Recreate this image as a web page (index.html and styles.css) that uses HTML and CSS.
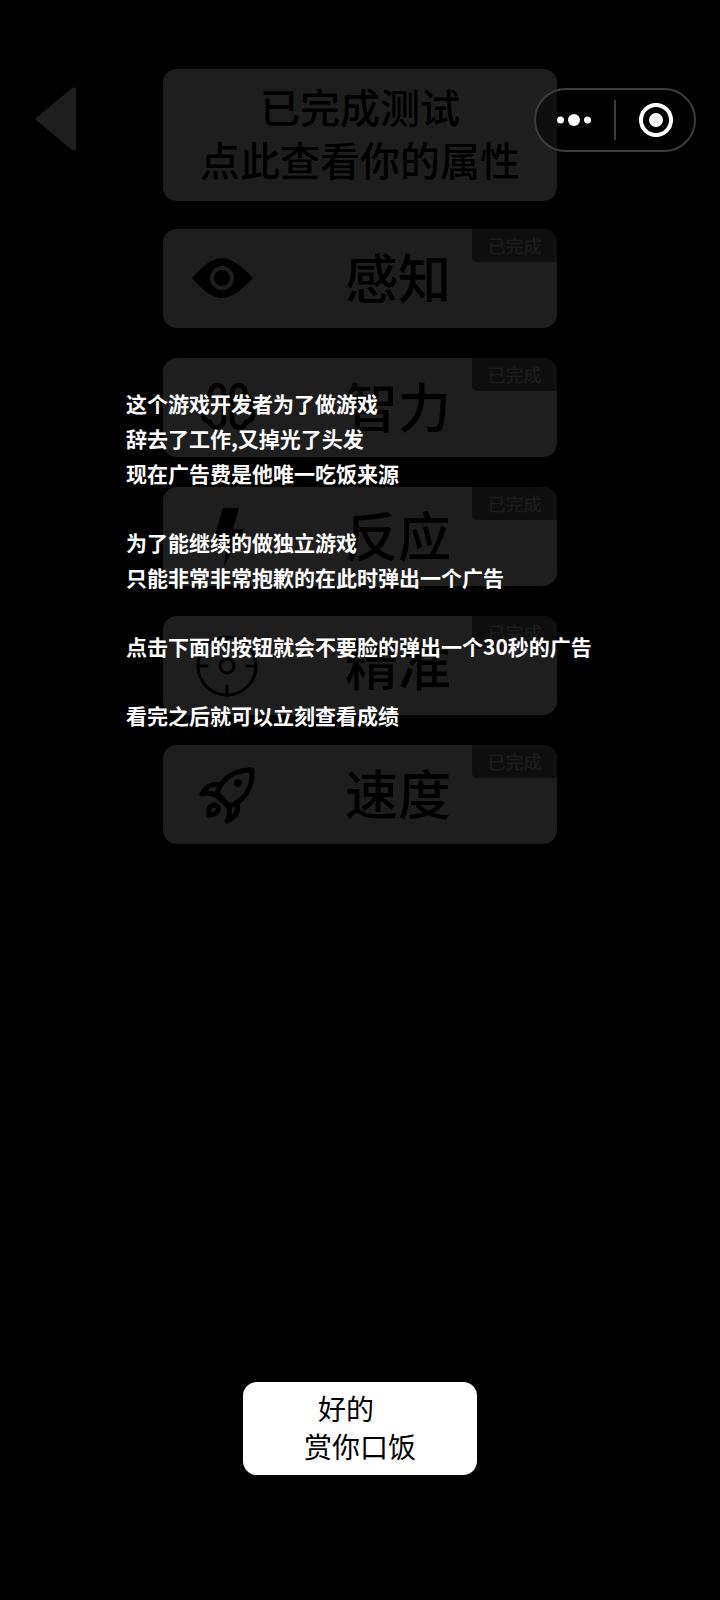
FILE: index.html
```html
<!DOCTYPE html>
<html lang="zh-CN">
<head>
    <meta charset="UTF-8">
    <meta name="viewport" content="width=device-width, initial-scale=1.0">
    <title>能力测试</title>
    <link rel="stylesheet" href="styles.css">
</head>
<body>
<div class="page">
    <header class="top">
        <button class="back" type="button" aria-label="返回">
            <svg width="42" height="64" viewBox="0 0 42 64"><path d="M1 33Q0 32 1 31L37 1Q41 -1 41 2V62Q41 65 37 63Z" fill="#fff"/></svg>
        </button>
        <button class="result" type="button">已完成测试<br>点此查看你的属性</button>
    </header>

    <main class="list">
        <button class="card" type="button">
            <svg class="icon" viewBox="0 0 64 64">
                <path d="M1 31C12 18 22 11 31 11S50 18 62 31C50 44 40 51 31 51S12 44 1 31Z"/>
                <circle cx="31" cy="31" r="10" fill="none" stroke="#fff" stroke-width="4"/>
            </svg>
            <span class="name">感知</span>
            <span class="badge">已完成</span>
        </button>
        <button class="card" type="button">
            <svg class="icon line" viewBox="0 0 64 64">
                <path d="M33 17V43C33 53 21 54 19 46C11 45 10 36 16 32C11 28 13 21 20 20V16C20 7 33 7 33 17Z"/>
                <path d="M41 17V43C41 53 53 54 55 46C63 45 64 36 58 32C63 28 61 21 54 20V16C54 7 41 7 41 17Z"/>
            </svg>
            <span class="name">智力</span>
            <span class="badge">已完成</span>
        </button>
        <button class="card" type="button">
            <svg class="icon" viewBox="0 0 64 64">
                <path d="M32 3H48L42 24H53L33 61L36 37H22Z"/>
            </svg>
            <span class="name">反应</span>
            <span class="badge">已完成</span>
        </button>
        <button class="card" type="button">
            <svg class="icon line thin" viewBox="0 0 64 64">
                <circle cx="36" cy="32" r="29"/>
                <circle cx="36" cy="32" r="7"/>
                <path d="M36 3V12M36 52V61M7 32H16M56 32H65"/>
            </svg>
            <span class="name">精准</span>
            <span class="badge">已完成</span>
        </button>
        <button class="card" type="button">
            <svg class="icon line" viewBox="0 0 64 64">
                <path d="M26 30C30 17 43 6 61 7C62 25 53 39 38 43Z"/>
                <path d="M30 22C22 20 15 23 11 31Q20 29 26 33L38 44Q40 51 36 58C45 54 48 47 46 39"/>
                <path d="M18 52C17 44 20 42 23 42C27 42 29 46 26 49C24 51 22 52 18 52Z"/>
                <circle cx="47" cy="20" r="4" fill="#000" stroke="none"/>
            </svg>
            <span class="name">速度</span>
            <span class="badge">已完成</span>
        </button>
    </main>
</div>

<div class="mask" role="dialog" aria-label="广告提示">
    <div class="message">
        <p>这个游戏开发者为了做游戏<br>辞去了工作,又掉光了头发<br>现在广告费是他唯一吃饭来源</p>
        <p>为了能继续的做独立游戏<br>只能非常非常抱歉的在此时弹出一个广告</p>
        <p>点击下面的按钮就会不要脸的弹出一个30秒的广告</p>
        <p>看完之后就可以立刻查看成绩</p>
    </div>
    <button class="confirm" type="button"><span class="ok">好的</span><span>赏你口饭</span></button>
</div>

<div class="capsule">
    <button type="button" aria-label="更多">
        <svg width="36" height="36" viewBox="0 0 36 36" fill="#fff"><circle cx="3.5" cy="18" r="3.5"/><circle cx="17" cy="18" r="6"/><circle cx="30.5" cy="18" r="3.5"/></svg>
    </button>
    <button type="button" aria-label="关闭">
        <svg width="36" height="36" viewBox="0 0 36 36"><circle cx="19" cy="18" r="15" fill="none" stroke="#fff" stroke-width="4"/><circle cx="19" cy="18" r="7" fill="#fff"/></svg>
    </button>
</div>
</body>
</html>
```
FILE: styles.css
```css
* {
    box-sizing: border-box;
}
body {
    margin: 0;
    min-height: 100vh;
    position: relative;
    background: #000;
    font-family: "Noto Sans CJK SC", sans-serif;
}
button {
    margin: 0;
    padding: 0;
    border: none;
    background: none;
    font-family: inherit;
    color: #000;
}
svg {
    display: block;
}
.page {
    padding-top: 69px;
}
.top {
    display: grid;
    grid-template-columns: 1fr minmax(0, 394px) 1fr;
    align-items: center;
    margin-bottom: 28px;
}
.back {
    justify-self: start;
    margin-left: 35px;
    margin-bottom: 32px;
}
.result {
    padding: 11px 0 15px;
    border-radius: 14px;
    background: #fff;
    font-size: 40px;
    font-weight: 500;
    line-height: 53px;
}
.list {
    display: grid;
    gap: 30px;
    max-width: 394px;
    margin: 0 auto;
}
.card {
    position: relative;
    display: flex;
    align-items: center;
    height: 99px;
    padding-left: 28px;
    border-radius: 14px;
    background: #fff;
    overflow: hidden;
}
.icon {
    width: 64px;
    height: 64px;
    overflow: visible;
}
.line {
    fill: none;
    stroke: #000;
    stroke-width: 5;
    stroke-linecap: round;
    stroke-linejoin: round;
}
.thin {
    stroke-width: 3;
}
.name {
    margin-left: 90px;
    padding-bottom: 6px;
    font-size: 53px;
    font-weight: 500;
    line-height: 64px;
}
.badge {
    position: absolute;
    top: 0;
    right: 0;
    width: 85px;
    border-bottom-left-radius: 5px;
    background: #808080;
    color: #f5f5f5;
    font-size: 18px;
    line-height: 33px;
}

/* dark layer with the ad prompt */
.mask {
    position: absolute;
    inset: 0;
    display: flex;
    flex-direction: column;
    align-items: center;
    justify-content: space-between;
    padding: 386px 0 125px;
    background: rgba(0, 0, 0, 0.882);
}
.message {
    display: grid;
    gap: 34px;
    align-self: stretch;
    padding-left: 126px;
    color: #fff;
    font-size: 21px;
    font-weight: 700;
    line-height: 35px;
}
.message p {
    margin: 0;
}
.confirm {
    display: flex;
    flex-direction: column;
    align-items: center;
    width: 234px;
    padding: 7px 0 10px;
    border-radius: 14px;
    background: #fff;
    font-size: 28px;
    line-height: 38px;
}
.ok {
    padding-right: 28px;
}

.capsule {
    position: absolute;
    top: 88px;
    right: 24px;
    display: flex;
    width: 162px;
    height: 64px;
    padding: 10px 0;
    border: 2px solid #3c3c3c;
    border-radius: 32px;
    background: rgba(0, 0, 0, 0.5);
}
.capsule button {
    flex: 1;
    display: flex;
    align-items: center;
    justify-content: center;
}
.capsule button + button {
    border-left: 2px solid #3c3c3c;
}
```
